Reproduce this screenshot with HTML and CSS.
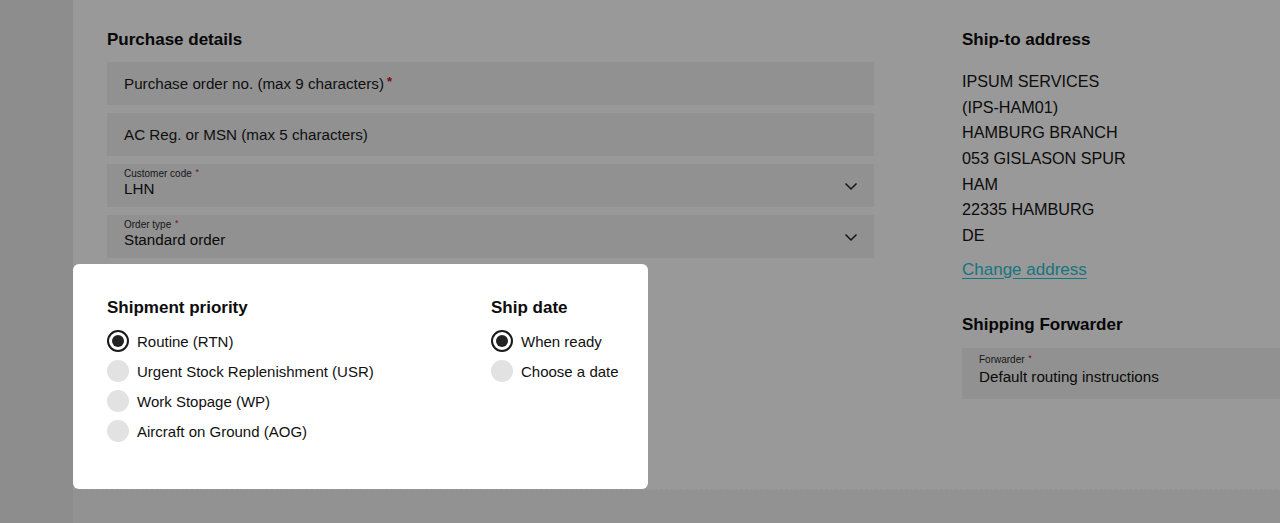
FILE: index.html
```html
<!DOCTYPE html>
<html lang="en">
<head>
<meta charset="utf-8">
<title>Checkout</title>
<link rel="stylesheet" href="styles.css">
</head>
<body>
<div class="page">
  <aside class="side"></aside>
  <main class="main">
    <div class="columns">
      <div class="left">
        <section class="purchase">
          <h2 class="heading">Purchase details</h2>
          <div class="fields">
            <div class="field field-input">Purchase order no. (max 9 characters)<span class="req">*</span></div>
            <div class="field field-input">AC Reg. or MSN (max 5 characters)</div>
            <div class="field field-select">
              <div class="field-text">
                <div class="field-label">Customer code <span class="req">*</span></div>
                <div class="field-value">LHN</div>
              </div>
              <svg class="chevron" width="14" height="9" viewBox="0 0 14 9"><polyline points="1.5,1.5 7,7 12.5,1.5" fill="none" stroke="#222" stroke-width="1.5"/></svg>
            </div>
            <div class="field field-select">
              <div class="field-text">
                <div class="field-label">Order type <span class="req">*</span></div>
                <div class="field-value">Standard order</div>
              </div>
              <svg class="chevron" width="14" height="9" viewBox="0 0 14 9"><polyline points="1.5,1.5 7,7 12.5,1.5" fill="none" stroke="#222" stroke-width="1.5"/></svg>
            </div>
          </div>
        </section>
        <section class="card">
          <div class="card-col">
            <h2 class="heading">Shipment priority</h2>
            <ul class="radios">
              <li class="radio-row"><span class="radio checked"></span>Routine (RTN)</li>
              <li class="radio-row"><span class="radio"></span>Urgent Stock Replenishment (USR)</li>
              <li class="radio-row"><span class="radio"></span>Work Stopage (WP)</li>
              <li class="radio-row"><span class="radio"></span>Aircraft on Ground (AOG)</li>
            </ul>
          </div>
          <div class="card-col">
            <h2 class="heading">Ship date</h2>
            <ul class="radios">
              <li class="radio-row"><span class="radio checked"></span>When ready</li>
              <li class="radio-row"><span class="radio"></span>Choose a date</li>
            </ul>
          </div>
        </section>
      </div>
      <div class="right">
        <h2 class="heading">Ship-to address</h2>
        <address class="address">IPSUM SERVICES<br>(IPS-HAM01)<br>HAMBURG BRANCH<br>053 GISLASON SPUR<br>HAM<br>22335 HAMBURG<br>DE</address>
        <a class="link" href="#">Change address</a>
        <h2 class="heading forwarder-heading">Shipping Forwarder</h2>
        <div class="field field-forwarder">
          <div class="field-label">Forwarder <span class="req">*</span></div>
          <div class="field-value">Default routing instructions</div>
        </div>
      </div>
    </div>
    <div class="footer"></div>
  </main>
</div>
<div class="overlay"></div>
</body>
</html>
```

FILE: styles.css
```css
* { box-sizing: border-box; }
html, body {
  margin: 0;
  padding: 0;
  height: 100%;
  overflow: hidden;
}
body {
  font-family: "Liberation Sans", Arial, Helvetica, sans-serif;
  color: #1a1a1a;
  background: #fff;
}
.page {
  display: flex;
  min-height: 100%;
}
.side {
  width: 73px;
  flex: none;
  background: #ececec;
}
.main {
  flex: 1;
  display: flex;
  flex-direction: column;
  min-width: 0;
}
.columns {
  display: flex;
  gap: 54px;
  padding-top: 28px;
}
.left {
  width: 835px;
  flex: none;
}
.purchase {
  padding: 0 34px;
}
.heading {
  margin: 0;
  font-size: 17px;
  line-height: 24px;
  font-weight: bold;
  color: #0d0d0d;
}
.fields {
  margin-top: 10px;
  display: flex;
  flex-direction: column;
  gap: 8px;
}
.field {
  background: #f2f2f2;
  padding: 0 17px;
  font-size: 15.2px;
  color: #1a1a1a;
}
.field-input {
  height: 43px;
  display: flex;
  align-items: center;
}
.req {
  color: #d0102a;
  font-size: 11px;
  margin-left: 3px;
  position: relative;
}
.field-input .req {
  top: -2px;
  font-size: 13px;
  font-weight: bold;
}
.field-select {
  height: 43px;
  display: flex;
  align-items: center;
  justify-content: space-between;
  padding-right: 16px;
}
.field-text {
  align-self: flex-start;
  padding-top: 4px;
}
.field-label {
  font-size: 10px;
  line-height: 12px;
  color: #2a2a2a;
}
.field-label .req {
  font-size: 9px;
  margin-left: 1px;
  top: -2px;
}
.field-value {
  font-size: 15.2px;
  line-height: 18px;
  color: #111;
}
.chevron {
  display: block;
  margin-top: 1px;
}
.card {
  position: relative;
  z-index: 20;
  margin-top: 6px;
  width: 575px;
  height: 225px;
  background: #fff;
  border-radius: 6px;
  padding: 32px 0 0 34px;
  display: grid;
  grid-template-columns: 384px 1fr;
}
.radios {
  list-style: none;
  margin: 6px 0 0;
  padding: 0;
}
.radio-row {
  display: flex;
  align-items: center;
  height: 30px;
  font-size: 15px;
  color: #111;
  white-space: nowrap;
}
.radio {
  width: 22px;
  height: 22px;
  border-radius: 50%;
  background: #e2e2e2;
  margin-right: 8px;
  flex: none;
}
.radio.checked {
  background: #fff;
  border: 2px solid #1a1a1a;
  display: flex;
  align-items: center;
  justify-content: center;
}
.radio.checked::after {
  content: "";
  width: 12px;
  height: 12px;
  border-radius: 50%;
  background: #222;
}
.right {
  flex: 1;
  min-width: 0;
}
.address {
  margin-top: 17px;
  font-style: normal;
  font-size: 16.2px;
  line-height: 25.67px;
  color: #141414;
}
.link {
  display: block;
  margin-top: 9px;
  font-size: 17px;
  line-height: 24px;
  color: #2ac4d6;
  text-decoration: underline;
  text-underline-offset: 3px;
}
.forwarder-heading {
  margin-top: 31px;
}
.field-forwarder {
  margin-top: 11px;
  width: 360px;
  height: 51px;
  padding-top: 6px;
}
.field-forwarder .field-value {
  line-height: 20px;
  margin-top: 1px;
}
.footer {
  flex: 1;
  border-top: 1px dashed #ffffff;
  background: #f3f3f3;
}
.overlay {
  position: fixed;
  inset: 0;
  background: rgba(0, 0, 0, 0.4);
  z-index: 10;
}
```
